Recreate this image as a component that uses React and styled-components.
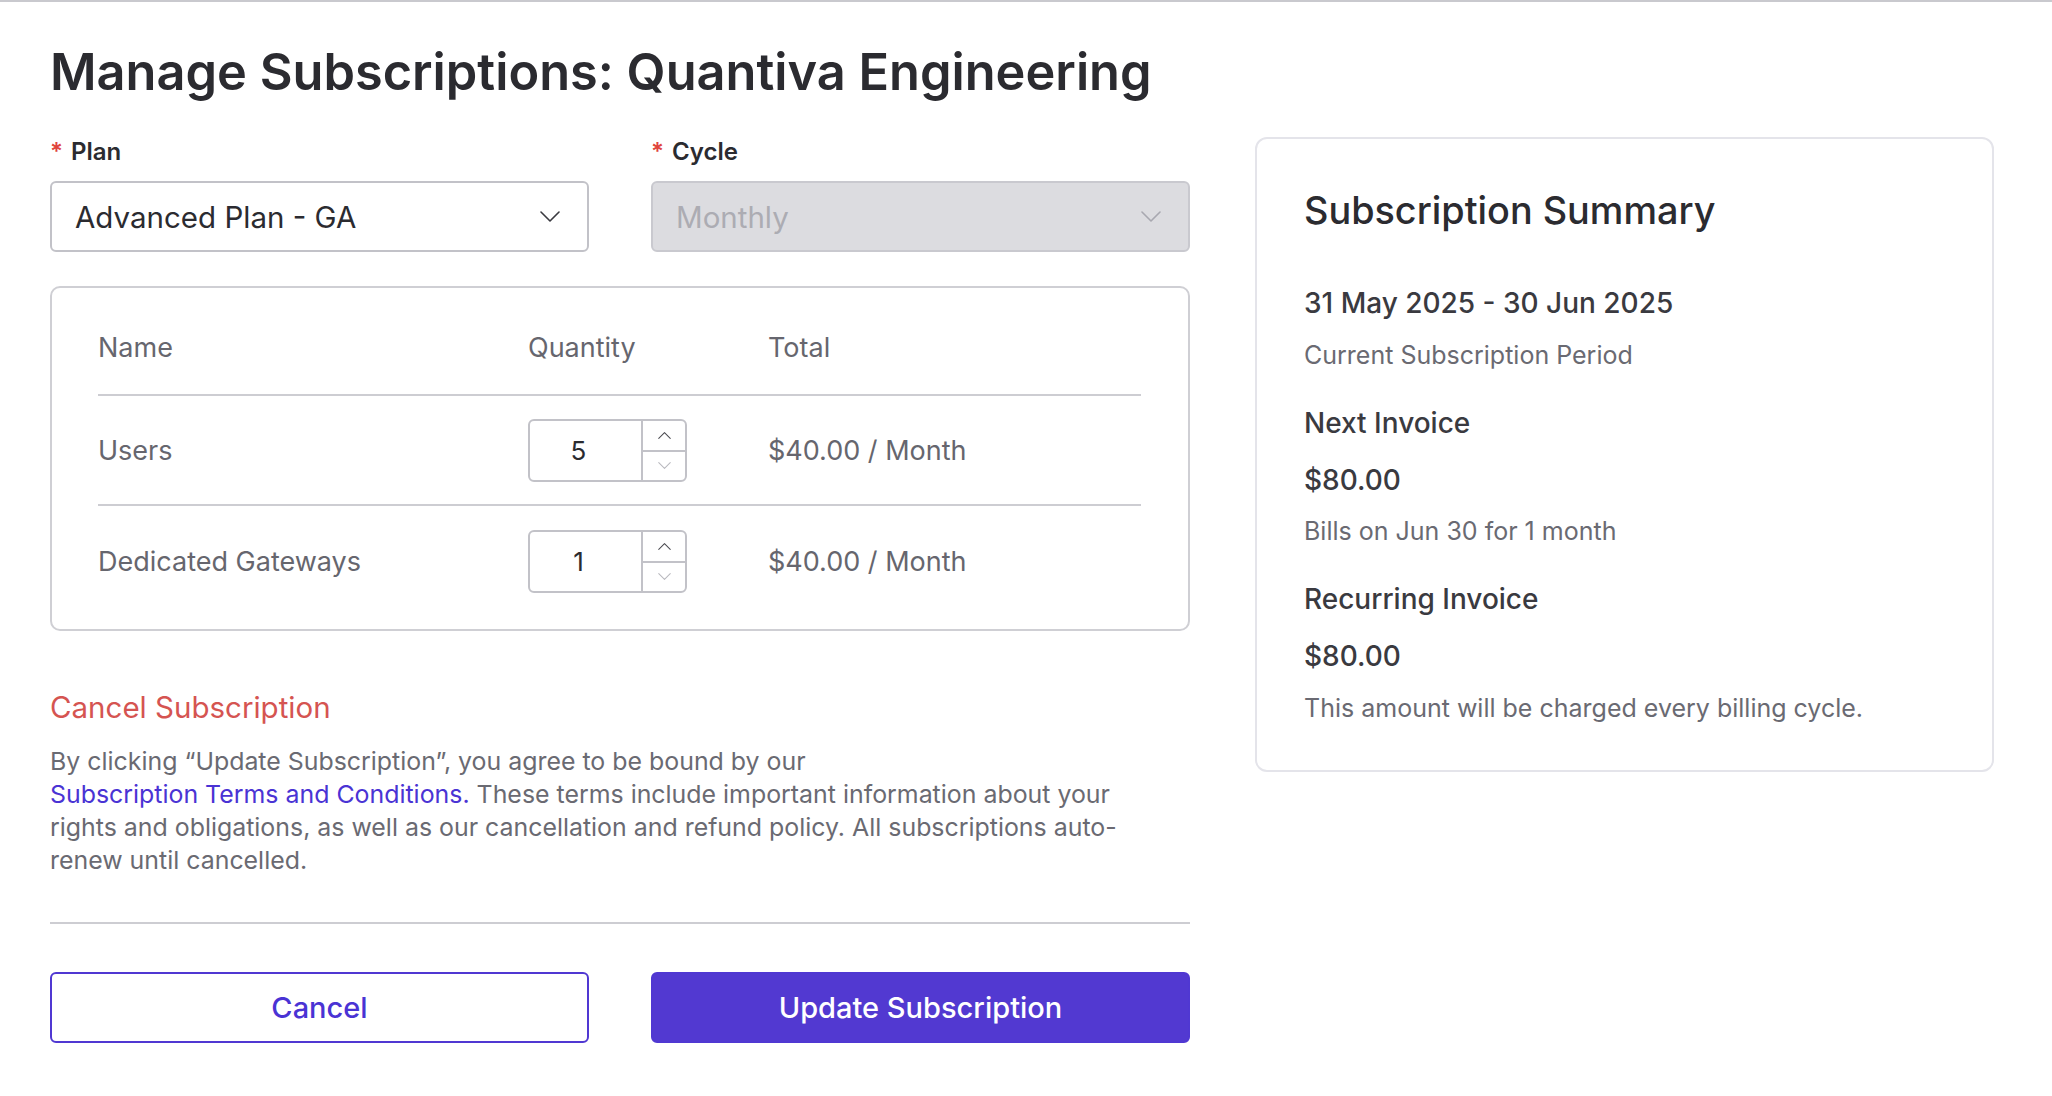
import React from 'react';
import styled, { createGlobalStyle } from 'styled-components';

const GlobalStyle = createGlobalStyle`
  body {
    margin: 0;
    font-family: 'Inter', 'Open Sans', sans-serif;
    background: #ffffff;
    color: #2b2b30;
    border-top: 2px solid #c9c9ce;
  }
`;

// layout
const Page = styled.div`
  display: flex;
  align-items: flex-start;
  gap: 65px;
  padding: 0 58px 0 50px;
`;

const Main = styled.div`
  width: 1140px;
  flex-shrink: 0;
`;

const Title = styled.h1`
  margin: 38px 0 0;
  font-size: 50.5px;
  line-height: 64px;
  font-weight: 600;
  color: #2b2b30;
`;

const FieldRow = styled.div`
  display: grid;
  grid-template-columns: 1fr 1fr;
  gap: 62px;
  margin-top: 33px;
`;

const Field = styled.div`
  display: flex;
  flex-direction: column;
  gap: 14px;
`;

const Label = styled.label`
  font-size: 24px;
  line-height: 30px;
  font-weight: 600;
  color: #2b2b30;
  span {
    color: #e0443e;
    margin-right: 8px;
  }
`;

const Select = styled.div`
  height: 71px;
  box-sizing: border-box;
  display: flex;
  align-items: center;
  justify-content: space-between;
  padding: 0 27px 0 23px;
  border: 2px solid ${p => (p.disabled ? '#c9c9cf' : '#c2c2c8')};
  border-radius: 6px;
  background: ${p => (p.disabled ? '#dcdce0' : '#ffffff')};
  color: ${p => (p.disabled ? '#acacb3' : '#2b2b30')};
  font-size: 29.5px;
`;

const Chevron = ({ color, w = 20, h = 11, up }) => (
  <svg width={w} height={h} viewBox="0 0 20 11" fill="none">
    <polyline
      points={up ? '1,10 10,1 19,10' : '1,1 10,10 19,1'}
      stroke={color}
      strokeWidth="1.6"
      strokeLinecap="round"
      strokeLinejoin="round"
    />
  </svg>
);

const TableCard = styled.div`
  margin-top: 34px;
  border: 2px solid #cfcfd4;
  border-radius: 10px;
  padding: 12px 47px 13px 46px;
`;

const Row = styled.div`
  display: grid;
  grid-template-columns: 430px 240px 1fr;
  align-items: center;
  height: ${p => (p.head ? '96px' : '110px')};
  border-bottom: ${p => (p.last ? 'none' : '2px solid #cdcdd2')};
  box-sizing: border-box;
  font-size: 27px;
  color: #66666e;
`;

const Stepper = styled.div`
  width: 159px;
  height: 63px;
  box-sizing: border-box;
  border: 2px solid #c2c2c8;
  border-radius: 6px;
  display: grid;
  grid-template-columns: 1fr 44px;
  overflow: hidden;
`;

const StepValue = styled.div`
  display: flex;
  align-items: center;
  justify-content: center;
  font-size: 26px;
  color: #2b2b30;
  padding-right: 14px;
`;

const StepButtons = styled.div`
  display: grid;
  grid-template-rows: 1fr 1fr;
  border-left: 2px solid #c2c2c8;
`;

const StepButton = styled.div`
  display: flex;
  align-items: center;
  justify-content: center;
  border-top: ${p => (p.down ? '2px solid #c2c2c8' : 'none')};
`;

const CancelLink = styled.div`
  margin-top: 56px;
  font-size: 29.5px;
  line-height: 40px;
  color: #d55451;
`;

const Legal = styled.p`
  margin: 18px 0 0;
  font-size: 24.9px;
  line-height: 33px;
  color: #6a6a72;
  a {
    color: #4a33d4;
    text-decoration: none;
  }
`;

const Divider = styled.hr`
  margin: 45px 0 0;
  border: none;
  border-top: 2px solid #cdcdd2;
`;

const Actions = styled.div`
  display: grid;
  grid-template-columns: 1fr 1fr;
  gap: 62px;
  margin-top: 48px;
`;

const Button = styled.button`
  height: 71px;
  border-radius: 6px;
  font-family: inherit;
  font-size: 29px;
  font-weight: 500;
  border: 2px solid #5038d2;
  background: ${p => (p.primary ? '#5239d1' : '#ffffff')};
  color: ${p => (p.primary ? '#ffffff' : '#4a33d4')};
  cursor: pointer;
`;

// summary card
const Summary = styled.aside`
  width: 739px;
  box-sizing: border-box;
  margin-top: 135px;
  border: 2px solid #e4e4ea;
  border-radius: 12px;
  padding: 46px 40px 45px 47px;
`;

const SummaryTitle = styled.h2`
  margin: 0 0 48px;
  font-size: 37.8px;
  line-height: 50px;
  font-weight: 500;
  color: #2b2b30;
`;

const Heading = styled.div`
  font-size: 28px;
  line-height: 40px;
  font-weight: 500;
  color: #3a3a40;
  margin-top: ${p => p.mt || 0}px;
`;

const Note = styled.div`
  font-size: 25px;
  line-height: 34px;
  color: #6a6a72;
  margin-top: ${p => p.mt || 0}px;
`;

const items = [
  { name: 'Users', qty: 5, total: '$40.00 / Month' },
  { name: 'Dedicated Gateways', qty: 1, total: '$40.00 / Month' },
];

export default function App() {
  return (
    <>
      <GlobalStyle />
      <Page>
        <Main>
          <Title>Manage Subscriptions: Quantiva Engineering</Title>

          <FieldRow>
            <Field>
              <Label><span>*</span>Plan</Label>
              <Select>
                Advanced Plan - GA
                <Chevron color="#3a3a40" />
              </Select>
            </Field>
            <Field>
              <Label><span>*</span>Cycle</Label>
              <Select disabled>
                Monthly
                <Chevron color="#a8a8b0" />
              </Select>
            </Field>
          </FieldRow>

          <TableCard>
            <Row head>
              <div>Name</div>
              <div>Quantity</div>
              <div>Total</div>
            </Row>
            {items.map((it, i) => (
              <Row key={it.name} last={i === items.length - 1}>
                <div>{it.name}</div>
                <div>
                  <Stepper>
                    <StepValue>{it.qty}</StepValue>
                    <StepButtons>
                      <StepButton>
                        <Chevron up color="#4a4a50" w={13} h={7} />
                      </StepButton>
                      <StepButton down>
                        <Chevron color="#b8b8be" w={13} h={7} />
                      </StepButton>
                    </StepButtons>
                  </Stepper>
                </div>
                <div>{it.total}</div>
              </Row>
            ))}
          </TableCard>

          <CancelLink>Cancel Subscription</CancelLink>
          <Legal>
            By clicking “Update Subscription”, you agree to be bound by our
            <br />
            <a href="#terms">Subscription Terms and Conditions.</a> These terms include important information about your
            <br />
            rights and obligations, as well as our cancellation and refund policy. All subscriptions auto-
            <br />
            renew until cancelled.
          </Legal>

          <Divider />

          <Actions>
            <Button>Cancel</Button>
            <Button primary>Update Subscription</Button>
          </Actions>
        </Main>

        <Summary>
          <SummaryTitle>Subscription Summary</SummaryTitle>
          <Heading>31 May 2025 - 30 Jun 2025</Heading>
          <Note mt={15}>Current Subscription Period</Note>
          <Heading mt={31}>Next Invoice</Heading>
          <Heading mt={17}>$80.00</Heading>
          <Note mt={14}>Bills on Jun 30 for 1 month</Note>
          <Heading mt={31}>Recurring Invoice</Heading>
          <Heading mt={17}>$80.00</Heading>
          <Note mt={15}>This amount will be charged every billing cycle.</Note>
        </Summary>
      </Page>
    </>
  );
}
